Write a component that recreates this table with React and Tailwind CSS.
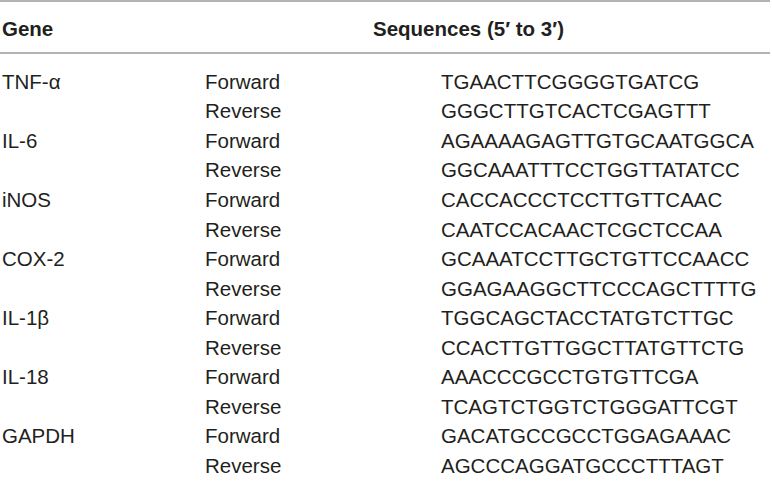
import React from "react";

const rows = [
  ["TNF-α", "Forward", "TGAACTTCGGGGTGATCG"],
  ["", "Reverse", "GGGCTTGTCACTCGAGTTT"],
  ["IL-6", "Forward", "AGAAAAGAGTTGTGCAATGGCA"],
  ["", "Reverse", "GGCAAATTTCCTGGTTATATCC"],
  ["iNOS", "Forward", "CACCACCCTCCTTGTTCAAC"],
  ["", "Reverse", "CAATCCACAACTCGCTCCAA"],
  ["COX-2", "Forward", "GCAAATCCTTGCTGTTCCAACC"],
  ["", "Reverse", "GGAGAAGGCTTCCCAGCTTTTG"],
  ["IL-1β", "Forward", "TGGCAGCTACCTATGTCTTGC"],
  ["", "Reverse", "CCACTTGTTGGCTTATGTTCTG"],
  ["IL-18", "Forward", "AAACCCGCCTGTGTTCGA"],
  ["", "Reverse", "TCAGTCTGGTCTGGGATTCGT"],
  ["GAPDH", "Forward", "GACATGCCGCCTGGAGAAAC"],
  ["", "Reverse", "AGCCCAGGATGCCCTTTAGT"],
];

export default function App() {
  return (
    <div
      className="w-[772px] h-[482px] bg-white text-[#231f20] text-[20.5px] overflow-hidden"
      style={{ fontFamily: '"Liberation Sans", Arial, sans-serif' }}
    >
      <div className="w-[770px] border-t-2 border-b-2 border-[#b3b3b3]">
        <div className="h-[50px] pt-[4px] flex items-center font-bold leading-[24px]">
          <div className="w-[373px] pl-[2px]">Gene</div>
          <div>Sequences (5′ to 3′)</div>
        </div>
      </div>
      <div className="mt-[13px] flex flex-col">
        {rows.map((r, i) => (
          <div
            key={i}
            className="grid grid-cols-[203px_236px_1fr] h-[29.55px] items-center leading-[24px] pl-[2px] whitespace-nowrap"
          >
            <div>{r[0]}</div>
            <div>{r[1]}</div>
            <div>{r[2]}</div>
          </div>
        ))}
      </div>
    </div>
  );
}
